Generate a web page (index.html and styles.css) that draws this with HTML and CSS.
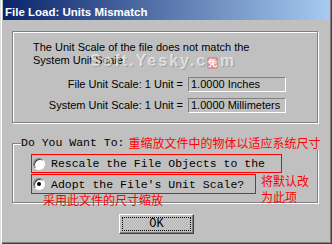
FILE: index.html
```html
<!DOCTYPE html>
<html lang="zh">
<head>
  <meta charset="UTF-8">
  <title>File Load: Units Mismatch</title>
  <link rel="stylesheet" href="styles.css">
</head>
<body>

  <div class="window">
    <div class="titlebar">File Load: Units Mismatch</div>

    <div class="group info">
      <p class="msg">The Unit Scale of the file does not match the<br>System Unit Scale.</p>
      <div class="scales">
        <span class="lbl">File Unit Scale: 1 Unit =</span>
        <span class="field">1.0000 Inches</span>
        <span class="lbl">System Unit Scale: 1 Unit =</span>
        <span class="field">1.0000 Millimeters</span>
      </div>
      <div class="watermark">Soft.Yesky.c<span class="wm-logo">凭</span>m</div>
    </div>

    <fieldset class="group choice">
      <legend><span class="mono">Do You Want To:</span><span class="note note-rescale">重缩放文件中的物体以适应系统尺寸</span></legend>
      <label class="option opt1"><span class="radio"></span>Rescale the File Objects to the</label>
      <label class="option opt2"><span class="radio on"></span>Adopt the File's Unit Scale?</label>
      <span class="note note-default">将默认改<br>为此项</span>
      <span class="note note-adopt">采用此文件的尺寸缩放</span>
    </fieldset>

    <button class="ok"><span>OK</span></button>
  </div>

</body>
</html>
```

FILE: styles.css
```css
body {
  margin: 0;
  font-family: "Liberation Sans", Arial, sans-serif;
  font-size: 11px;
  background: #c0c0c0;
}

.window {
  width: 332px;
  height: 244px;
  box-sizing: border-box;
  padding: 0 3px 3px 3px;
  background: #c0c0c0;
  box-shadow: inset 1px 0 0 #dfdfdf, inset 2px 0 0 #fff, inset -1px -1px 0 #404040, inset -2px -2px 0 #808080;
}

.titlebar {
  height: 20px;
  box-sizing: border-box;
  padding: 4px 0 0 2px;
  line-height: 16px;
  font-size: 11.5px;
  font-weight: bold;
  color: #fff;
  background: linear-gradient(to right, #0a246a, #a6caf0);
}

.group {
  box-sizing: border-box;
  margin: 0 11px 0 9px;
  border: 1px solid #808080;
  box-shadow: inset 1px 1px 0 #fff, 1px 1px 0 #fff;
}

.info {
  position: relative;
  height: 92px;
  margin-top: 11px;
  padding: 9px 31px 0 20px;
}

.msg {
  margin: 0;
  line-height: 13px;
}

.scales {
  display: grid;
  grid-template-columns: auto 98px;
  justify-content: end;
  column-gap: 5px;
  row-gap: 6px;
  margin-top: 10px;
  line-height: 15px;
}

.lbl {
  text-align: right;
}

.field {
  height: 15px;
  box-sizing: border-box;
  padding-left: 2px;
  border: 1px solid;
  border-color: #808080 #fff #fff #808080;
  line-height: 13px;
}

.watermark {
  position: absolute;
  left: 77px;
  top: 21px;
  font-size: 16px;
  line-height: 16px;
  font-weight: bold;
  letter-spacing: 2px;
  color: rgba(255,255,255,0.6);
  text-shadow: 1px 1px 0 rgba(120,120,120,0.45);
}

.wm-logo {
  display: inline-block;
  width: 11px;
  height: 12px;
  margin-right: 2px;
  font-size: 9px;
  line-height: 12px;
  text-align: center;
  letter-spacing: 0;
  color: #fff;
  background: rgba(230,110,110,0.6);
  border-radius: 2px;
  text-shadow: none;
}

.choice {
  position: relative;
  height: 67px;
  min-width: 0;
  margin-top: 13px;
  padding: 0;
}

.choice legend {
  margin-left: 8px;
  padding: 0;
  height: 14px;
  line-height: 14px;
  white-space: nowrap;
  background: #c0c0c0;
}

.mono,
.option,
.ok {
  font-family: "Liberation Mono", "Courier New", monospace;
  font-size: 11.5px;
}

.mono {
  vertical-align: top;
}

.note {
  color: #f00;
  font-family: "Noto Sans CJK SC", sans-serif;
  font-size: 12px;
  line-height: 16px;
  white-space: nowrap;
}

.note-rescale {
  vertical-align: top;
  margin-left: 4px;
  line-height: 14px;
}

/* the fieldset content box starts below the legend */
.note-default {
  position: absolute;
  left: 248px;
  top: 23px;
}

.note-adopt {
  position: absolute;
  left: 30px;
  top: 42px;
}

.option {
  display: flex;
  align-items: center;
  box-sizing: border-box;
  margin-left: 18px;
  padding-left: 1px;
  border: 1px solid #f00;
  white-space: nowrap;
}

.opt1 {
  width: 251px;
  height: 19px;
  margin-top: 4px;
}

.opt2 {
  width: 225px;
  height: 20px;
  margin-top: 1px;
}

.radio {
  position: relative;
  width: 12px;
  height: 12px;
  box-sizing: border-box;
  margin-right: 6px;
  border: 1px solid;
  border-color: #808080 #fff #fff #808080;
  border-radius: 50%;
  background: #fff;
  box-shadow: inset 1px 1px 0 #404040;
}

.radio.on::after {
  content: "";
  position: absolute;
  left: 3px;
  top: 3px;
  width: 4px;
  height: 4px;
  border-radius: 50%;
  background: #000;
}

.ok {
  display: block;
  width: 75px;
  height: 20px;
  box-sizing: border-box;
  margin: 11px 0 0 116px;
  padding: 2px;
  border: 1px solid;
  border-color: #fff #404040 #404040 #fff;
  box-shadow: inset -1px -1px 0 #808080;
  background: #c0c0c0;
  color: #000;
  font-size: 12px;
}

.ok span {
  display: block;
  height: 100%;
  box-sizing: border-box;
  border: 1px dotted #000;
  line-height: 12px;
}
```
